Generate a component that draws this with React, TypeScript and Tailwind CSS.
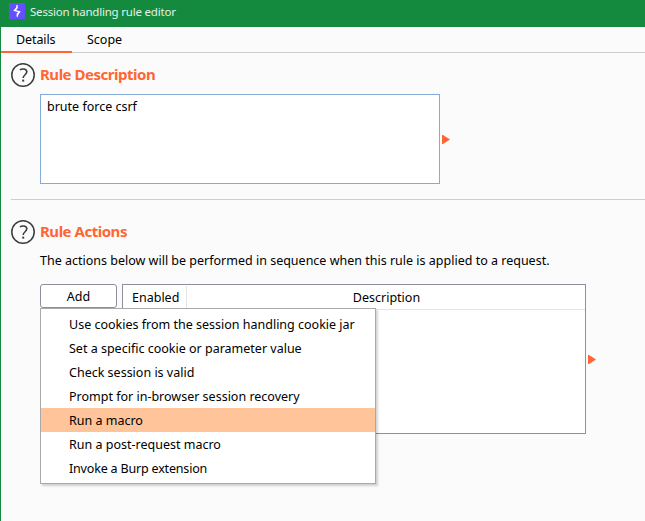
import type { ReactNode } from "react";

function HelpIcon() {
  return (
    <svg width="24" height="24" viewBox="0 0 24 24" fill="none" stroke="#3c3c3c" className="shrink-0">
      <circle cx="12" cy="12" r="11.2" strokeWidth="1.5" />
      <path d="M8.9 7 C10.8 5.4 15.8 5.4 15.8 8.8 C15.8 11.7 12.2 11.8 12.2 15" strokeWidth="1.6" />
      <path d="M12.2 16.6 V18.6" strokeWidth="2" />
    </svg>
  );
}

function Arrow() {
  return (
    <svg width="8" height="9" viewBox="0 0 8 9" className="ml-0.5 shrink-0">
      <path d="M0 0 H1 L8 4.5 L1 9 H0 Z" fill="#ff6633" />
    </svg>
  );
}

function Heading({ children }: { children: ReactNode }) {
  return (
    <div className="flex h-6 items-center gap-[5px] pl-2.5">
      <HelpIcon />
      <h2 className="h-6 text-[15px] leading-[23px] font-bold tracking-[-0.48px] text-[#ff6633]">{children}</h2>
    </div>
  );
}

const menuItems = [
  { label: "Use cookies from the session handling cookie jar" },
  { label: "Set a specific cookie or parameter value" },
  { label: "Check session is valid" },
  { label: "Prompt for in-browser session recovery" },
  { label: "Run a macro", active: true },
  { label: "Run a post-request macro" },
  { label: "Invoke a Burp extension" },
];

export default function App() {
  return (
    <div className="flex h-[521px] w-[645px] flex-col overflow-hidden border-l border-[#138a3e] bg-[#fbfbfb] font-['Noto_Sans','Open_Sans',sans-serif] text-[12.5px] leading-6 whitespace-nowrap text-black">
      <header className="flex h-[27px] shrink-0 items-start bg-[#138a3e] pl-2 text-[11.5px] tracking-[-0.2px] text-[#e4f1e8]">
        <svg width="16" height="16" viewBox="0 0 16 16" className="mt-[3px] mr-[5px]">
          <path d="M0 0H16V16H0Z" fill="#6450ff" />
          <path d="M8 2V5L5.5 7.5L10.5 8.8L8.3 11V13.8" fill="none" stroke="#fff" strokeWidth="1.4" />
          <path d="M8 4.2L6 7.4M10.5 8.8L8.3 12.5" fill="none" stroke="#fff" strokeWidth="1.1" />
        </svg>
        <span>Session handling rule editor</span>
      </header>
      <nav className="flex h-[26px] shrink-0 border-b border-[#c8cccc]">
        <span className="h-[26px] w-[71px] border-b-2 border-[#ff6633] pl-[15px] leading-[25px] tracking-[-0.1px]">Details</span>
        <span className="pl-[15px] leading-[25px]">Scope</span>
      </nav>
      <main className="flex flex-col">
        <section className="pt-2.5">
          <Heading>Rule Description</Heading>
          <div className="mt-[7px] flex items-center pl-[39px]">
            <div className="h-[90px] w-[400px] border border-[#84abd7] bg-white pl-1.5 leading-[23px]">brute force csrf</div>
            <Arrow />
          </div>
        </section>
        <hr className="mt-[15px] ml-2.5 border-[#cecece]" />
        <section className="pt-5">
          <Heading>Rule Actions</Heading>
          <p className="mt-1 h-6 pl-[39px] leading-[26px]">The actions below will be performed in sequence when this rule is applied to a request.</p>
          <div className="mt-3 flex items-start pl-[39px]">
            <div className="relative">
              <button className="block h-6 w-[77px] rounded-[3px] border border-[#8f8e9d] bg-white text-center leading-6">Add</button>
              <ul className="absolute top-6 left-0 w-[336px] border border-[#a9a9a9] bg-white py-[3px] leading-[26px] shadow-[2px_2px_2px_rgba(0,0,0,0.17)]">
                {menuItems.map(({ label, active }) => (
                  <li key={label} className={active ? "h-6 bg-[#ffc499] pl-7" : "h-6 pl-7 last:tracking-[-0.18px]"}>
                    {label}
                  </li>
                ))}
              </ul>
            </div>
            <div className="ml-[5px] flex items-center">
              <div className="h-[150px] w-[464px] border border-[#8f8e9d] bg-white">
                <div className="flex h-[25px] border-b border-[#e4e4e4] leading-[26px]">
                  <span className="my-px w-16 border-r border-[#e4e4e4] pl-[9px] leading-6">Enabled</span>
                  <span className="flex-1 pl-px text-center">Description</span>
                </div>
              </div>
              <Arrow />
            </div>
          </div>
        </section>
      </main>
    </div>
  );
}
